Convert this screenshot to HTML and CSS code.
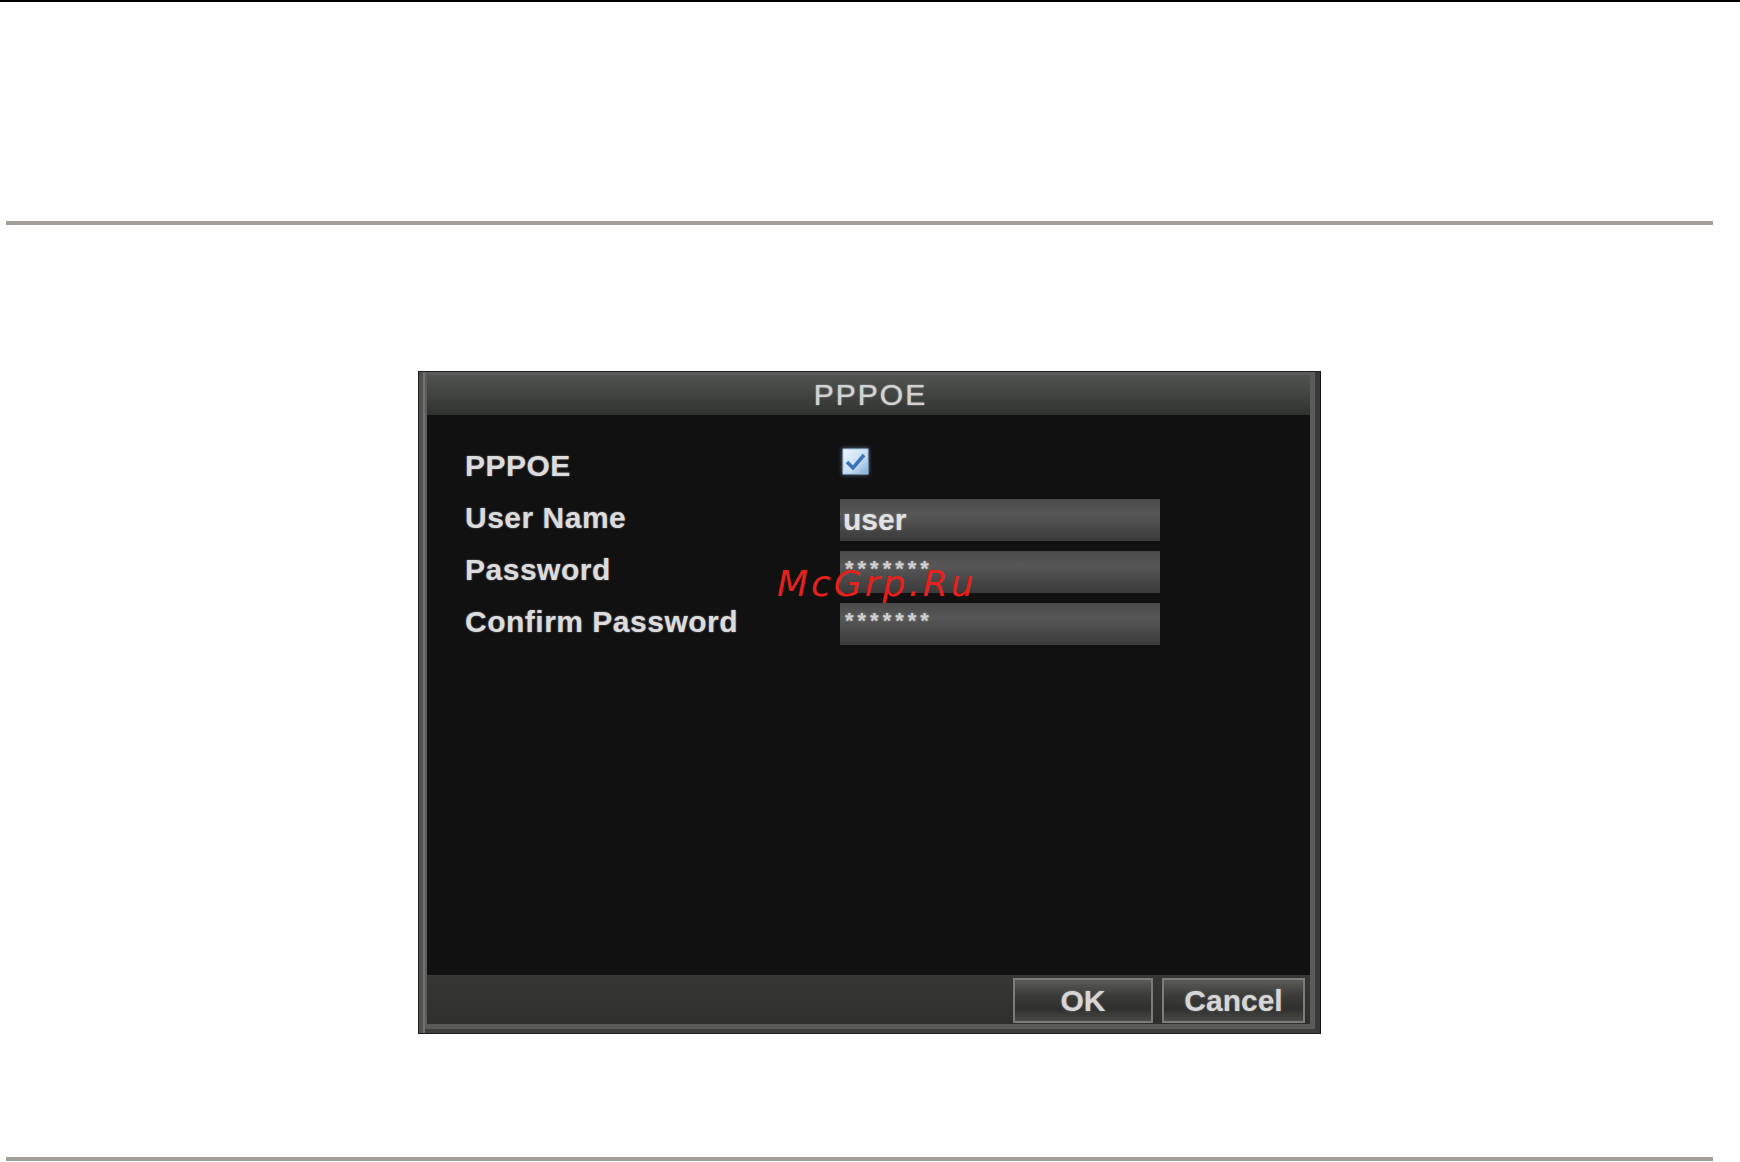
FILE: index.html
```html
<!DOCTYPE html>
<html lang="en">
<head>
    <meta charset="UTF-8">
    <title>PPPOE</title>
    <link rel="stylesheet" href="styles.css">
</head>
<body>

    <!-- page rules -->
    <div class="top-rule"></div>
    <div class="page-rule"></div>

    <!-- PPPOE dialog -->
    <div class="dialog">
        <div class="dialog-title">PPPOE</div>

        <div class="dialog-body">
            <div class="form-grid">
                <div class="label">PPPOE</div>
                <div class="field">
                    <svg class="checkbox" width="27" height="27" viewBox="0 0 27 27">
                        <defs>
                            <linearGradient id="cb" x1="0" y1="0" x2="1" y2="1">
                                <stop offset="0" stop-color="#f2f8ff"/>
                                <stop offset="0.6" stop-color="#c3dcf2"/>
                                <stop offset="1" stop-color="#7eaad4"/>
                            </linearGradient>
                        </defs>
                        <rect x="1" y="1" width="25" height="25" fill="url(#cb)" stroke="#a4c4e2" stroke-width="1"/>
                        <path d="M5 14 L11 20 L22 7" fill="none" stroke="#3c72b8" stroke-width="3.5"/>
                    </svg>
                </div>

                <div class="label">User Name</div>
                <div class="field"><div class="input">user</div></div>

                <div class="label">Password</div>
                <div class="field"><div class="input"><span class="stars">*******</span></div></div>

                <div class="label">Confirm Password</div>
                <div class="field"><div class="input"><span class="stars">*******</span></div></div>
            </div>

            <div class="watermark">McGrp.Ru</div>
        </div>

        <div class="dialog-footer">
            <button class="btn btn-ok">OK</button>
            <button class="btn btn-cancel">Cancel</button>
        </div>
    </div>

    <div class="page-rule bottom-rule"></div>

</body>
</html>
```

FILE: styles.css
```css
/* reset */
* {
    margin: 0;
    padding: 0;
    box-sizing: border-box;
}

body {
    width: 1740px;
    height: 1162px;
    background: #fff;
    font-family: 'Liberation Sans', Arial, sans-serif;
    overflow: hidden;
}

/* rules */
.top-rule {
    height: 2px;
    background: #000;
}

.page-rule {
    width: 1707px;
    height: 4px;
    margin: 219px 0 0 6px;
    background: #a19f98;
}

.bottom-rule {
    margin-top: 123px;
}

/* dialog frame */
.dialog {
    width: 903px;
    height: 663px;
    margin: 146px 0 0 418px;
    padding: 3px 10px 9px 8px;
    background: #5b5c5a;
    border: 1px solid #1f1f1f;
    border-right-color: #141414;
    box-shadow: inset 4px 0 0 #4f504e, inset 6px 0 0 #707170, inset -5px 0 0 #3a3a3a, inset 0 -4px 0 #3e3f3d;
    display: flex;
    flex-direction: column;
}

.dialog-title {
    height: 40px;
    background: linear-gradient(#505250, #434542 45%, #30322f);
    color: #d2d3d2;
    font-size: 30px;
    letter-spacing: 2px;
    text-align: center;
    line-height: 40px;
    padding-left: 4px;
    text-shadow: 0 0 1px #aaa, 0 0 2px rgba(200, 200, 200, 0.5);
}

.dialog-body {
    position: relative;
    height: 560px;
    background: #111112;
    padding: 32px 0 0 38px;
}

.form-grid {
    display: grid;
    grid-template-columns: 375px 320px;
    grid-auto-rows: 42px;
    row-gap: 10px;
}

.label {
    color: #dcdcdc;
    font-size: 30px;
    font-weight: bold;
    letter-spacing: 0.5px;
    line-height: 38px;
    text-shadow: 0 0 2px rgba(200, 200, 220, 0.6);
}

.field {
    display: flex;
    align-items: flex-start;
}

.checkbox {
    margin: 1px 0 0 2px;
    filter: drop-shadow(0 0 2px rgba(140, 180, 230, 0.6));
}

.input {
    width: 320px;
    height: 42px;
    background: linear-gradient(#4a4a4a, #575757 35%, #4a4a4a 65%, #3a3a3a);
    color: #e2e2e2;
    font-size: 30px;
    font-weight: bold;
    line-height: 42px;
    padding-left: 3px;
    text-shadow: 0 0 2px rgba(255, 255, 255, 0.4);
}

.stars {
    display: block;
    font-size: 22px;
    letter-spacing: 4px;
    line-height: 22px;
    padding: 7px 0 0 2px;
    color: #cfcfcf;
}

/* watermark over the form */
.watermark {
    position: absolute;
    left: 350px;
    top: 151px;
    font-family: 'DejaVu Sans', sans-serif;
    font-style: italic;
    font-size: 36px;
    line-height: 1;
    letter-spacing: 3px;
    color: #e3211d;
}

/* footer with buttons */
.dialog-footer {
    height: 49px;
    background: linear-gradient(#373834, #2f302c);
    display: flex;
    justify-content: flex-end;
    align-items: flex-start;
    gap: 9px;
    padding: 3px 5px 0 0;
}

.btn {
    height: 45px;
    border: 2px solid #7c7d7b;
    background: linear-gradient(#5a5b59, #3a3b39 40%, #2f302e 70%, #4a4b49);
    color: #d6d6d6;
    font-family: 'Liberation Sans', Arial, sans-serif;
    font-size: 30px;
    font-weight: bold;
    line-height: 41px;
    text-shadow: 0 0 2px rgba(255, 255, 255, 0.4);
}

.btn-ok {
    width: 140px;
}

.btn-cancel {
    width: 143px;
}
```
